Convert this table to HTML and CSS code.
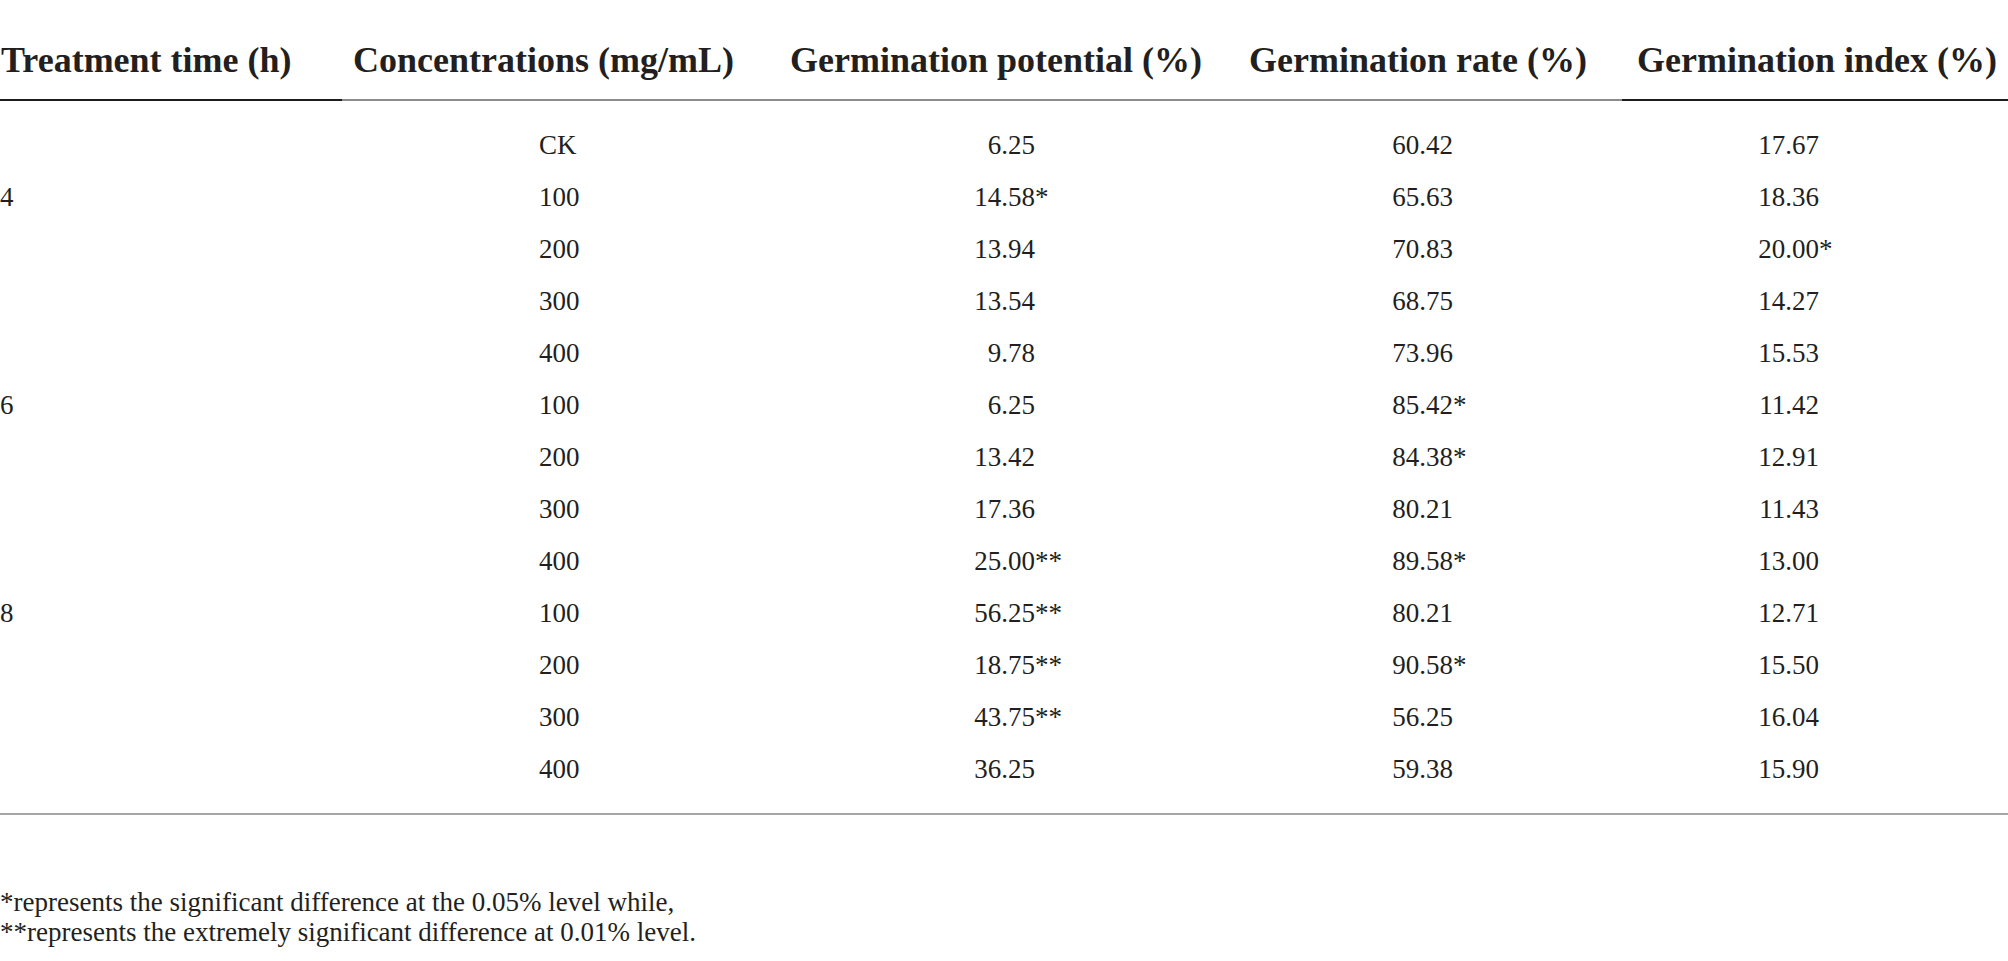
FILE: index.html
```html
<!DOCTYPE html>
<html lang="en">
<head>
<meta charset="utf-8">
<title>Germination table</title>
<link rel="stylesheet" href="styles.css">
</head>
<body>
<div class="page">
  <table class="data">
    <colgroup>
      <col class="w1"><col class="w2"><col class="w3"><col class="w4"><col class="w5">
    </colgroup>
    <thead>
      <tr>
        <th class="h1 dark">Treatment time (h)</th>
        <th class="h2">Concentrations (mg/mL)</th>
        <th class="h3">Germination potential (%)</th>
        <th class="h4">Germination rate (%)</th>
        <th class="h5 dark">Germination index (%)</th>
      </tr>
    </thead>
    <tbody>
      <tr class="first"><td class="c1"></td><td class="c2">CK</td><td class="c3"><span class="num">6.25</span></td><td class="c4"><span class="num">60.42</span></td><td class="c5"><span class="num">17.67</span></td></tr>
      <tr><td class="c1">4</td><td class="c2">100</td><td class="c3"><span class="num">14.58</span>*</td><td class="c4"><span class="num">65.63</span></td><td class="c5"><span class="num">18.36</span></td></tr>
      <tr><td class="c1"></td><td class="c2">200</td><td class="c3"><span class="num">13.94</span></td><td class="c4"><span class="num">70.83</span></td><td class="c5"><span class="num">20.00</span>*</td></tr>
      <tr><td class="c1"></td><td class="c2">300</td><td class="c3"><span class="num">13.54</span></td><td class="c4"><span class="num">68.75</span></td><td class="c5"><span class="num">14.27</span></td></tr>
      <tr><td class="c1"></td><td class="c2">400</td><td class="c3"><span class="num">9.78</span></td><td class="c4"><span class="num">73.96</span></td><td class="c5"><span class="num">15.53</span></td></tr>
      <tr><td class="c1">6</td><td class="c2">100</td><td class="c3"><span class="num">6.25</span></td><td class="c4"><span class="num">85.42</span>*</td><td class="c5"><span class="num">11.42</span></td></tr>
      <tr><td class="c1"></td><td class="c2">200</td><td class="c3"><span class="num">13.42</span></td><td class="c4"><span class="num">84.38</span>*</td><td class="c5"><span class="num">12.91</span></td></tr>
      <tr><td class="c1"></td><td class="c2">300</td><td class="c3"><span class="num">17.36</span></td><td class="c4"><span class="num">80.21</span></td><td class="c5"><span class="num">11.43</span></td></tr>
      <tr><td class="c1"></td><td class="c2">400</td><td class="c3"><span class="num">25.00</span>**</td><td class="c4"><span class="num">89.58</span>*</td><td class="c5"><span class="num">13.00</span></td></tr>
      <tr><td class="c1">8</td><td class="c2">100</td><td class="c3"><span class="num">56.25</span>**</td><td class="c4"><span class="num">80.21</span></td><td class="c5"><span class="num">12.71</span></td></tr>
      <tr><td class="c1"></td><td class="c2">200</td><td class="c3"><span class="num">18.75</span>**</td><td class="c4"><span class="num">90.58</span>*</td><td class="c5"><span class="num">15.50</span></td></tr>
      <tr><td class="c1"></td><td class="c2">300</td><td class="c3"><span class="num">43.75</span>**</td><td class="c4"><span class="num">56.25</span></td><td class="c5"><span class="num">16.04</span></td></tr>
      <tr class="last"><td class="c1"></td><td class="c2">400</td><td class="c3"><span class="num">36.25</span></td><td class="c4"><span class="num">59.38</span></td><td class="c5"><span class="num">15.90</span></td></tr>
    </tbody>
  </table>
  <div class="notes">
    <p class="note">*represents the significant difference at the 0.05% level while,</p>
    <p class="note">**represents the extremely significant difference at 0.01% level.</p>
  </div>
</div>
</body>
</html>
```

FILE: styles.css
```css
html, body {
  margin: 0;
  padding: 0;
  background: #ffffff;
  overflow: hidden;
}

.page {
  width: 2008px;
  font-family: "Liberation Serif", "Times New Roman", serif;
  color: #231f20;
}

.data {
  width: 2008px;
  border-collapse: collapse;
  table-layout: fixed;
}

.w1 { width: 342px; }
.w2 { width: 435px; }
.w3 { width: 459px; }
.w4 { width: 386px; }
.w5 { width: 386px; }

.data th {
  font-size: 36px;
  font-weight: bold;
  line-height: 40px;
  height: 99px;
  box-sizing: border-box;
  padding: 40px 0 19px 13px;
  text-align: left;
  vertical-align: top;
  white-space: nowrap;
  border-bottom: 2px solid #8c8c8c;
}

.data th.dark {
  border-bottom-color: #1c1c1c;
}

.data th.h1 { padding-left: 1px; }
.data th.h2 { padding-left: 11px; }
.data th.h5 { padding-left: 15px; }

.data td {
  font-size: 27px;
  line-height: 52px;
  height: 52px;
  padding: 0;
  text-align: left;
  vertical-align: middle;
  white-space: nowrap;
}

.data tr.first td { padding-top: 18px; }
.data tr.last td {
  padding-bottom: 18px;
  border-bottom: 2px solid #a6a6a6;
}

.data td.c1 { padding-left: 0; }
.data td.c2 { padding-left: 197px; }
.data td.c3 { padding-left: 197px; }
.data td.c4 { padding-left: 156px; }
.data td.c5 { padding-left: 136px; }

.num {
  display: inline-block;
  width: 61px;
  text-align: right;
}

.notes {
  padding-top: 72px;
}

.note {
  margin: 0;
  font-size: 27px;
  line-height: 30px;
  white-space: nowrap;
}
```
